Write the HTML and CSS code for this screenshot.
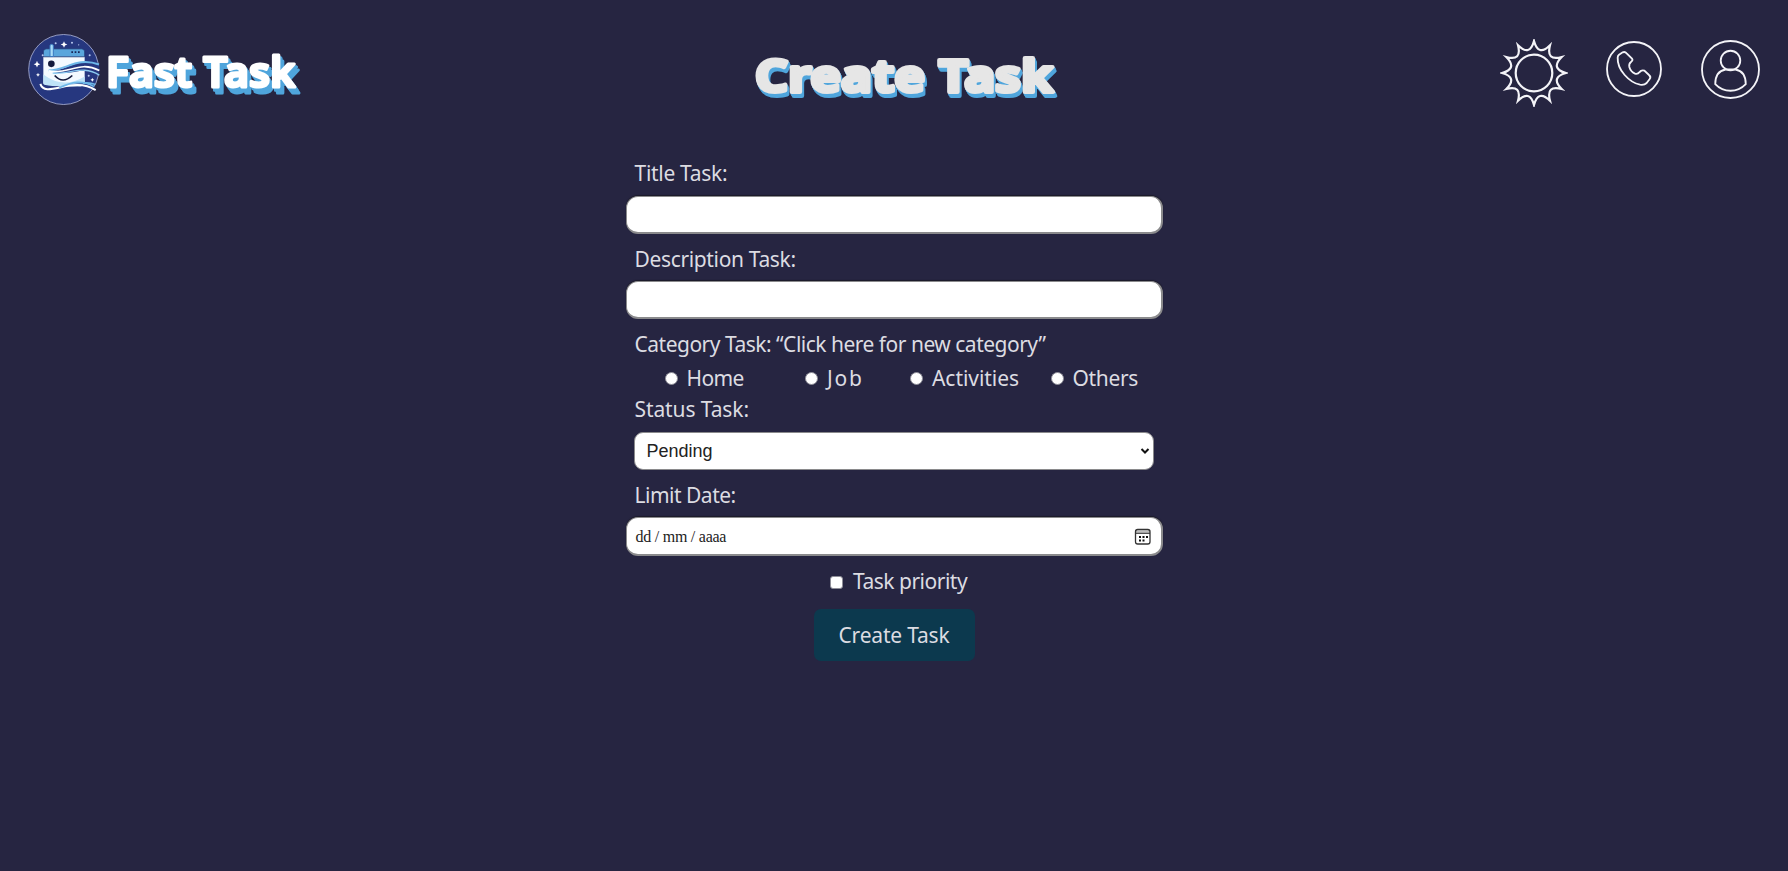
FILE: index.html
```html
<!DOCTYPE html>
<html lang="en">
<head>
<meta charset="utf-8">
<title>Fast Task</title>
<link rel="stylesheet" href="styles.css">
</head>
<body>
<header class="header">
  <div class="brand">
    <svg class="brand-logo" viewBox="26 38 216 218">
      <circle cx="133" cy="147" r="105" fill="#26377f" stroke="#a9b1d6" stroke-width="2.5"/>
      <path d="M72 108h124v76q0 13-13 13H84q-12 0-12-12z" fill="#f4faff"/>
      <path d="M72 162q60 45 124 6v18q0 11-12 11H84q-12 0-12-12z" fill="#bfe3f7"/>
      <path d="M72 109V94q0-9 10-9h104q10 0 10 9v15z" fill="#5aa6dc" stroke="#1d2d68" stroke-width="2"/>
      <path d="M156 95h5m5 0h5m5 0h5" stroke="#182557" stroke-width="5"/>
      <path d="M92 74q5-5 10 0v34h-10z" fill="#a9dcf8" stroke="#3a79c0" stroke-width="3"/>
      <circle cx="96" cy="130" r="10" fill="#141b3d"/>
      <path d="M106 165q24 27 53 0" fill="none" stroke="#141b3d" stroke-width="5"/>
      <path d="M88 150C140 156 172 106 240 132V164C192 130 150 174 88 150Z" fill="#26377f"/>
      <path d="M88 150C140 150 172 108 239 132" fill="none" stroke="#6db7e8" stroke-width="6"/>
      <path d="M88 151C145 165 178 118 240 150" fill="none" stroke="#fff" stroke-width="5"/>
      <path d="M100 158C155 162 190 132 240 164" fill="none" stroke="#8bcaf0" stroke-width="4"/>
      <path d="M62 188C80 232 158 160 230 209L222 192C166 174 130 214 62 188Z" fill="#26377f"/>
      <path d="M63 190C78 236 160 164 229 209" fill="none" stroke="#fff" stroke-width="6"/>
      <path d="M120 202C158 184 190 178 224 198M190 188Q210 184 228 192" fill="none" stroke="#6db7e8" stroke-width="5"/>
      <path d="M134 62l3 7 7 3-7 3-3 7-3-7-7-3 7-3zM53 121l3 7 7 3-7 3-3 7-3-7-7-3 7-3zM56 157l2 4 4 2-4 2-2 4-2-4-4-2 4-2zM219 172l2 4 4 2-4 2-2 4-2-4-4-2 4-2z" fill="#fff"/>
      <g fill="#b9c9ef"><circle cx="109" cy="68" r="3"/><circle cx="158" cy="67" r="3"/><circle cx="70" cy="104" r="3"/><circle cx="211" cy="104" r="3"/><circle cx="208" cy="166" r="3"/><circle cx="178" cy="73" r="2"/></g>
    </svg>
    <svg class="brand-name" viewBox="0 0 204 60">
      <text x="0" y="39.5" textLength="189" lengthAdjust="spacingAndGlyphs">Fast Task</text>
    </svg>
  </div>
  <svg class="page-title" viewBox="0 0 310 60">
    <text x="3" y="45" textLength="298" lengthAdjust="spacingAndGlyphs">Create Task</text>
  </svg>
  <nav class="nav">
    <svg class="icon-sun" viewBox="-34 -34 68 68">
      <circle r="18.3"/>
      <path d="M0-32Q4.300-16.100 16-27.700Q11.800-11.800 27.700-16Q16.100-4.300 32 0Q16.100 4.300 27.700 16Q11.800 11.800 16 27.700Q4.300 16.100 0 32Q-4.300 16.100-16 27.700Q-11.800 11.800-27.700 16Q-16.100 4.300-32 0Q-16.100-4.300-27.700-16Q-11.800-11.800-16-27.700Q-4.300-16.100 0-32Z"/>
    </svg>
    <svg class="icon-phone" viewBox="377 64 168 168">
      <circle cx="461" cy="148" r="81"/>
      <path d="M416 105L427 98Q434 95 439 101L455 117Q459 122 452 127Q445 132 447 142Q451 156 464 162Q473 164 477 158Q483 150 492 153L506 166Q513 172 508 178L499 190Q492 197 479 195Q454 190 433 166Q411 141 412 114Q412 108 416 105Z"/>
    </svg>
    <svg class="icon-user" viewBox="661 58 178 178">
      <circle cx="750" cy="147" r="86"/>
      <circle cx="750" cy="120" r="29.5"/>
      <path d="M735 147C713 151 704 170 704 191Q723 211 750 211Q777 211 796 191C796 170 787 151 765 147Z"/>
    </svg>
  </nav>
</header>
<main>
  <form class="form">
    <label class="label title">Title Task:</label>
    <input class="field" type="text">
    <label class="label description">Description Task:</label>
    <input class="field" type="text">
    <label class="label category">Category Task: “Click here for new category”</label>
    <div class="radios">
      <label class="option home"><input type="radio" name="category">Home</label>
      <label class="option job"><input type="radio" name="category">Job</label>
      <label class="option activities"><input type="radio" name="category">Activities</label>
      <label class="option others"><input type="radio" name="category">Others</label>
    </div>
    <label class="label status">Status Task:</label>
    <div class="select"><span>Pending</span>
      <svg width="10" height="8" viewBox="0 0 10 8"><path d="M1.500 2L5 5.500L8.500 2" fill="none" stroke="#111" stroke-width="2"/></svg>
    </div>
    <label class="label limit">Limit Date:</label>
    <div class="field date"><span>dd / mm / aaaa</span>
      <svg width="18" height="18" viewBox="0 0 18 18"><path d="M2 3.200h14" stroke="#bbb" stroke-width="1.500"/><rect x="1.500" y="1.500" width="14.500" height="14.500" rx="2.200" fill="none" stroke="#333" stroke-width="1.300"/><path d="M2 5.200h14" stroke="#333" stroke-width="1.300"/><path d="M5 9h2m1.500 0h2m1.500 0h2M5 12.500h2m1.500 0h2" stroke="#111" stroke-width="2"/></svg>
    </div>
    <label class="priority"><input type="checkbox">Task priority</label>
    <button class="submit" type="button">Create Task</button>
  </form>
</main>
</body>
</html>
```
FILE: styles.css
```css
* { box-sizing: border-box; }
body {
  margin: 0;
  height: 871px;
  background: #262541;
  color: #dcdce2;
  font: 21px/30px "Noto Sans", sans-serif;
  letter-spacing: -0.5px;
  overflow: hidden;
}
.header {
  display: grid;
  grid-template-columns: 1fr 310px 1fr;
  height: 150px;
  padding: 0 28px;
}
.brand { display: flex; padding-top: 33px; }
.brand-logo { width: 72px; height: 73px; }
.brand-name, .page-title { overflow: visible; letter-spacing: 0; stroke-linejoin: round; }
.brand-name {
  width: 204px;
  height: 60px;
  margin: 14px 0 0 6px;
  font: 600 42px "Noto Sans", sans-serif;
  fill: #fff;
  stroke: #fff;
  stroke-width: 3;
  filter: drop-shadow(2.5px 3px 0 #4fa5dc) drop-shadow(2.2px 3px 0 #4fa5dc);
}
.page-title {
  width: 310px;
  height: 60px;
  margin: 46.5px 0 0 13px;
  font: 700 45px "Noto Sans", sans-serif;
  fill: #e6e6e6;
  stroke: #e6e6e6;
  stroke-width: 4;
  filter: drop-shadow(1.5px 2px 0 #4fa5dc) drop-shadow(1.5px 2px 0 #4fa5dc);
}
.nav { display: flex; justify-content: flex-end; align-items: flex-start; }
.nav svg { fill: none; stroke: #f4f4f8; }
.icon-sun { width: 68px; height: 68px; margin: 38.5px 1px 0 0; stroke-width: 2.2; }
.icon-phone { width: 56px; height: 56px; margin: 41px 0 0 37px; stroke-width: 5.5; }
.icon-user { width: 59px; height: 59px; margin: 39.5px 0 0 39px; stroke-width: 5.5; }
.form { display: flex; flex-direction: column; width: 537px; margin: 0 auto; }
.label { height: 47px; padding: 10px 0 0 9px; white-space: nowrap; }
.label.title { height: 46px; padding-top: 8px; letter-spacing: -0.3px; }
.label.description { letter-spacing: -0.35px; }
.label.category { height: 43px; }
.label.status { height: 39px; padding-top: 1px; line-height: 31px; letter-spacing: -0.1px; }
.field {
  width: 537px;
  height: 38px;
  border: 1px solid #8a8a8c;
  border-width: 1px 2px 2px 1px;
  border-radius: 12px;
  background: #fff;
  box-shadow: 0 -1px 1px #1c1b29;
  outline: 0;
}
.radios { display: flex; height: 31px; padding-left: 39px; line-height: 32px; }
.option { display: flex; align-items: center; width: 140.5px; }
.option.home { letter-spacing: -0.6px; }
.option.job { width: 105px; letter-spacing: 1.8px; }
.option.activities { letter-spacing: -0.05px; }
.option.others { width: auto; letter-spacing: -0.35px; }
input[type="radio"], input[type="checkbox"] {
  appearance: none;
  flex: none;
  width: 13px;
  height: 13px;
  margin: 2px 9px 0 0;
  border: 1px solid #8e8e98;
  border-radius: 50%;
  background: #fff;
}
input[type="checkbox"] { border-radius: 3px; margin-right: 10px; }
.select {
  display: flex;
  align-items: center;
  justify-content: space-between;
  width: 520px;
  height: 38px;
  margin: 0 0 0 8px;
  padding: 0 3px 0 12px;
  border: 1px solid #8a8a8c;
  border-radius: 9px;
  background: #fff;
  color: #222;
  font: 18px "Liberation Sans", Arial, sans-serif;
  letter-spacing: 0;
}
.date {
  display: flex;
  align-items: center;
  justify-content: space-between;
  height: 39px;
  padding: 1px 9px 0 9px;
  color: #222;
  font: 16px "Liberation Serif", serif;
  letter-spacing: -0.25px;
}
.priority { display: flex; align-items: center; align-self: flex-start; height: 49px; margin-left: 204.5px; padding-top: 1px; }
.submit {
  align-self: center;
  width: 161px;
  height: 52px;
  margin-top: 4px;
  border: 0;
  border-radius: 7px;
  background: #0c394e;
  color: #dcdce2;
  font: inherit;
  letter-spacing: -0.2px;
}
```
